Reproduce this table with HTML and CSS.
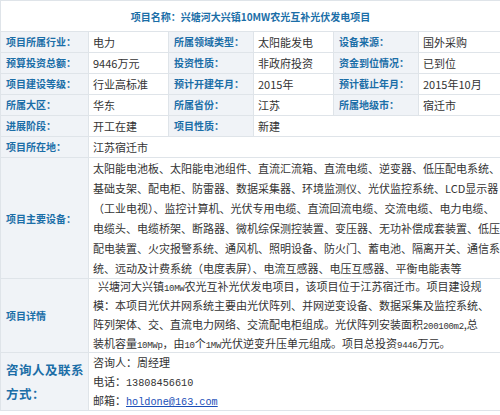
FILE: index.html
```html
<!DOCTYPE html>
<html lang="zh-CN">
<head>
<meta charset="utf-8">
<title>项目信息</title>
<link rel="stylesheet" href="styles.css">
</head>
<body>
<table class="info">
  <colgroup>
    <col class="c-label1">
    <col class="c-val1">
    <col class="c-label2">
    <col class="c-val2">
    <col class="c-label3">
    <col class="c-val3">
  </colgroup>
  <tr class="title-row">
    <td colspan="6" class="title">项目名称：兴塘河大兴镇10MW农光互补光伏发电项目</td>
  </tr>
  <tr class="row">
    <th>项目所属行业：</th><td>电力</td>
    <th>所属领域类型：</th><td>太阳能发电</td>
    <th>设备来源：</th><td>国外采购</td>
  </tr>
  <tr class="row">
    <th>预算投资总额：</th><td>9446万元</td>
    <th>投资性质：</th><td>非政府投资</td>
    <th>资金到位情况：</th><td>已到位</td>
  </tr>
  <tr class="row">
    <th>项目建设等级：</th><td>行业高标准</td>
    <th>预计开建年月：</th><td>2015年</td>
    <th>预计截止年月：</th><td>2015年10月</td>
  </tr>
  <tr class="row">
    <th>所属大区：</th><td>华东</td>
    <th>所属省份：</th><td>江苏</td>
    <th>所属地级市：</th><td>宿迁市</td>
  </tr>
  <tr class="row">
    <th>进展阶段：</th><td>开工在建</td>
    <th>项目性质：</th><td colspan="3">新建</td>
  </tr>
  <tr class="row">
    <th>项目所在地：</th><td colspan="5">江苏宿迁市</td>
  </tr>
  <tr class="long">
    <th>项目主要设备：</th>
    <td colspan="5" class="para">太阳能电池板、太阳能电池组件、直流汇流箱、直流电缆、逆变器、低压配电系统、<br>基础支架、配电柜、防雷器、数据采集器、环境监测仪、光伏监控系统、LCD显示器<br>（工业电视）、监控计算机、光伏专用电缆、直流回流电缆、交流电缆、电力电缆、<br>电缆头、电缆桥架、断路器、微机综保测控装置、变压器、无功补偿成套装置、低压<br>配电装置、火灾报警系统、通风机、照明设备、防火门、蓄电池、隔离开关、通信系<br>统、远动及计费系统（电度表屏）、电流互感器、电压互感器、平衡电能表等</td>
  </tr>
  <tr class="long">
    <th>项目详情</th>
    <td colspan="5" class="para detail"><div class="detail-text"><span class="indent">兴塘河大兴镇<span class="sm">10MW</span>农光互补光伏发电项目，该项目位于江苏宿迁市。项目建设规</span><br>模：本项目光伏并网系统主要由光伏阵列、并网逆变设备、数据采集及监控系统、<br>阵列架体、交、直流电力网络、交流配电柜组成。光伏阵列安装面积<span class="sm">200100m2</span>,总<br>装机容量<span class="sm">10MWp</span>，由<span class="sm">10</span>个<span class="sm">1MW</span>光伏逆变升压单元组成。项目总投资<span class="sm">9446</span>万元。</div></td>
  </tr>
  <tr class="long">
    <th class="contact-label">咨询人及联系方式：</th>
    <td colspan="5" class="contact">咨询人：周经理<br>电话：<span class="mono">13808456610</span><br>邮箱：<a class="mono" href="mailto:holdone@163.com">holdone@163.com</a></td>
  </tr>
</table>
</body>
</html>
```

FILE: styles.css
```css
html, body {
  margin: 0;
  padding: 0;
  background: #ffffff;
}

body {
  font-family: "Noto Sans CJK SC", "Noto Sans", sans-serif;
}

.info {
  width: 500px;
  border-collapse: collapse;
  table-layout: fixed;
  border: 1px solid #dfe4e9;
}

.c-label1 { width: 88px; }
.c-val1 { width: 80px; }
.c-label2 { width: 85px; }
.c-val2 { width: 80px; }
.c-label3 { width: 85px; }
.c-val3 { width: 82px; }

.info th,
.info td {
  border: 1px solid #dfe4e9;
  vertical-align: middle;
  white-space: nowrap;
  overflow: hidden;
}

.info th {
  background: #f0f3f7;
  color: #1b6ea7;
  font-size: 10px;
  font-weight: bold;
  text-align: left;
  padding: 0 0 0 5px;
}

.info td {
  color: #333333;
  font-size: 11px;
  padding: 0 0 0 4px;
  font-family: "Noto Sans CJK SC", "Liberation Sans", sans-serif;
}

.title-row td.title {
  height: 30px;
  text-align: center;
  color: #1b6ea7;
  font-weight: bold;
  font-size: 10px;
  padding: 0;
}

.row th,
.row td {
  height: 20px;
  line-height: 14px;
}

.para {
  line-height: 20px;
  padding: 0 0 0 3px;
}

.info td.detail {
  overflow: visible;
}

.detail-text {
  line-height: 19px;
  margin: -2px 0 -1px;
}

.indent {
  padding-left: 5px;
}

.sm {
  font-family: "Liberation Mono", monospace;
  font-size: 9px;
  letter-spacing: -0.3px;
  line-height: 1;
}

.contact-label {
  font-size: 12.5px !important;
  line-height: 24px;
  letter-spacing: 0.5px;
  white-space: normal !important;
  padding-right: 4px !important;
}

.info td.contact {
  line-height: 19px;
  padding: 0 0 0 4px;
  vertical-align: top;
}

.mono {
  font-family: "Liberation Mono", monospace;
  font-size: 10.2px;
  line-height: 1;
}

.contact a {
  color: #1b4fb8;
  text-decoration: underline;
}
```
